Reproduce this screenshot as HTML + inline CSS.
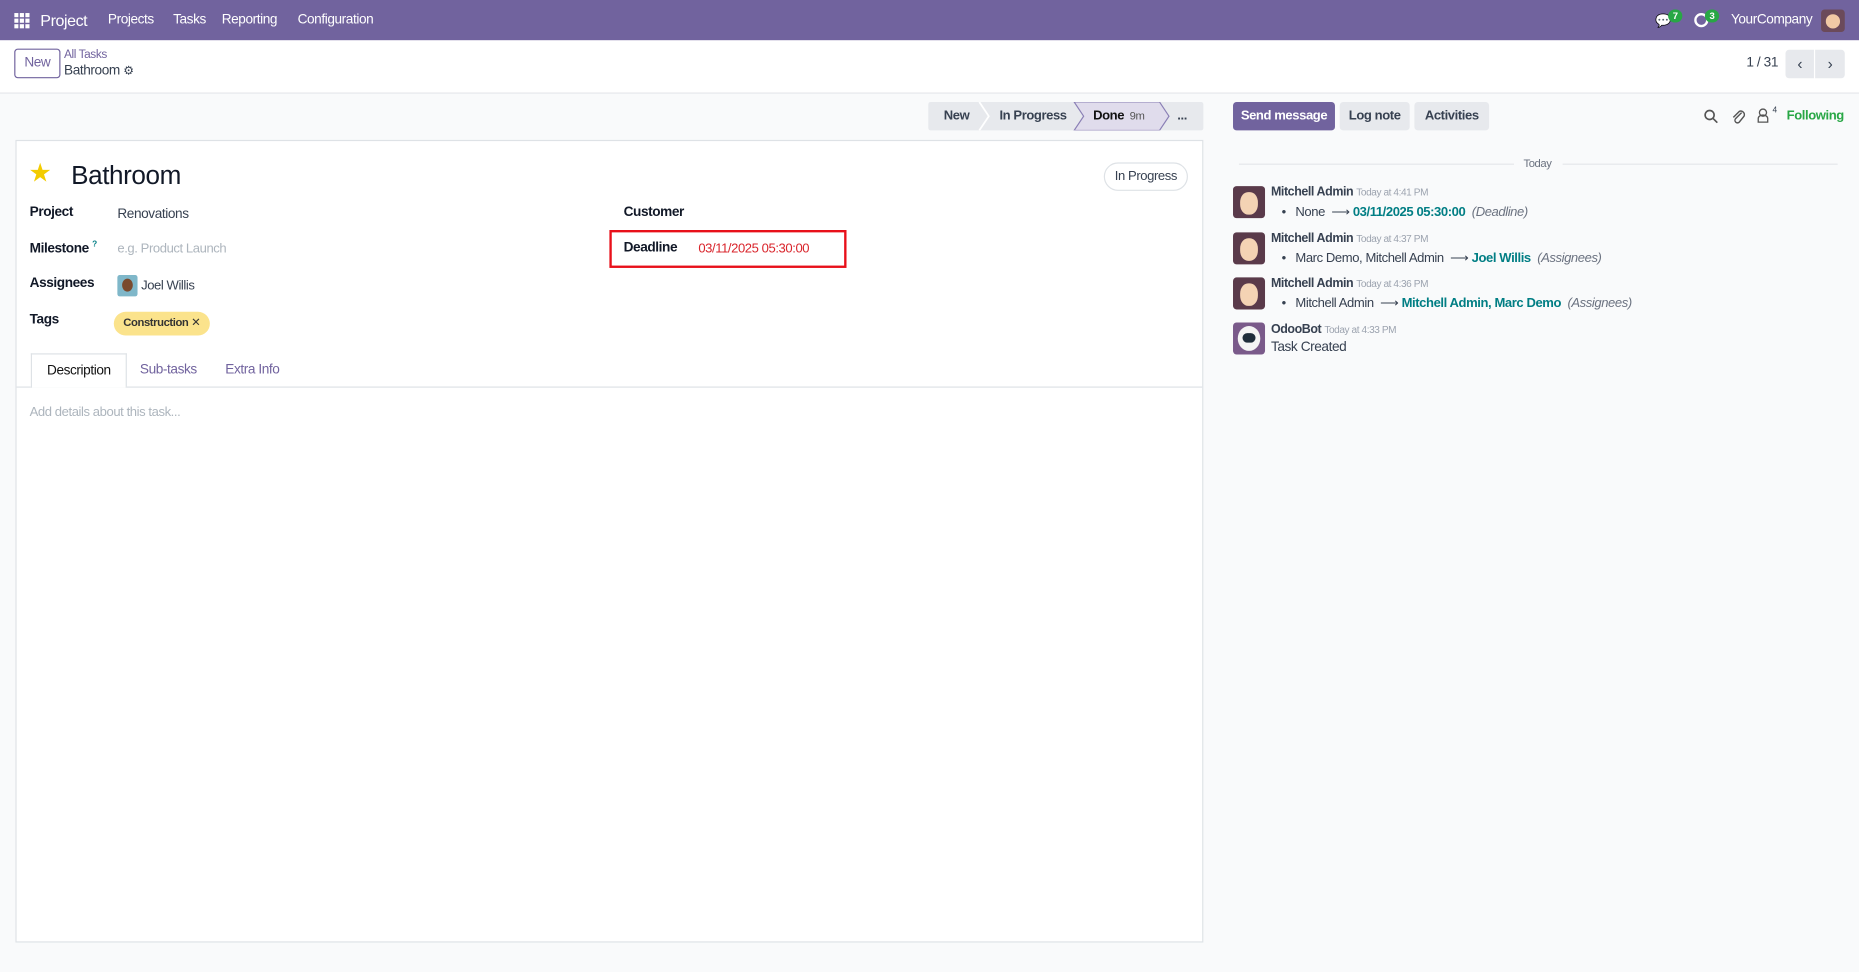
<!DOCTYPE html>
<html><head><meta charset="utf-8"><style>
*{box-sizing:border-box;margin:0;padding:0}
html,body{width:1859px;height:972px;overflow:hidden;background:#f9fafb}
#w{width:1568px;height:820px;transform:scale(1.18559);transform-origin:0 0;position:relative;font-family:"Liberation Sans",sans-serif;color:#374151;font-size:12px;letter-spacing:-0.35px}
.a{position:absolute;white-space:nowrap}
.nav{left:0;top:0;width:1568px;height:34px;background:#71639e;color:#fff}
.cp{left:0;top:34px;width:1568px;height:45px;background:#fff;border-bottom:1px solid #e5e7eb}
.btn{position:absolute;background:#e7e9ed;border-radius:3px;text-align:center;line-height:24px;font-weight:bold;color:#374151;font-size:11px}
.lbl{font-weight:bold;color:#111827;font-size:11.5px}
.av{position:absolute;width:27px;height:27px;border-radius:3px;background:#5a3a4a;overflow:hidden}
.nm{font-weight:bold;font-size:10.5px;color:#374151}
.tm{font-size:8.5px;color:#9ca3af;font-weight:normal}
.ln{color:#017e84;font-weight:bold}
.it{font-style:italic;color:#6b7280}
</style></head><body><div id="w">
<div class="a nav">
 <svg class="a" style="left:12px;top:11px" width="13" height="13" viewBox="0 0 13 13" fill="#fff"><rect x="0" y="0" width="3.5" height="3.5"/><rect x="4.7" y="0" width="3.5" height="3.5"/><rect x="9.4" y="0" width="3.5" height="3.5"/><rect x="0" y="4.7" width="3.5" height="3.5"/><rect x="4.7" y="4.7" width="3.5" height="3.5"/><rect x="9.4" y="4.7" width="3.5" height="3.5"/><rect x="0" y="9.4" width="3.5" height="3.5"/><rect x="4.7" y="9.4" width="3.5" height="3.5"/><rect x="9.4" y="9.4" width="3.5" height="3.5"/></svg>
 <div class="a" style="left:34px;top:10px;font-size:13.5px">Project</div>
 <div class="a" style="left:91px;top:11px;font-size:11.5px">Projects</div>
 <div class="a" style="left:146px;top:11px;font-size:11.5px">Tasks</div>
 <div class="a" style="left:187px;top:11px;font-size:11.5px">Reporting</div>
 <div class="a" style="left:251px;top:11px;font-size:11.5px">Configuration</div>
 <div class="a" style="left:1396px;top:11px;font-size:11px">💬</div>
 <div class="a" style="left:1407px;top:8px;width:12px;height:11px;border-radius:6px;background:#28a745;font-size:8px;text-align:center;line-height:11px;font-weight:bold">7</div>
 <div class="a" style="left:1429px;top:11px;width:12px;height:12px;border:2px solid #fff;border-radius:50%"></div>
 <div class="a" style="left:1438px;top:8px;width:12px;height:11px;border-radius:6px;background:#28a745;font-size:8px;text-align:center;line-height:11px;font-weight:bold">3</div>
 <div class="a" style="left:1460px;top:11px;font-size:11.5px">YourCompany</div>
 <div class="a" style="left:1536px;top:8px;width:20px;height:19px;border-radius:3px;background:#6b4a5a"><div style="margin:4px 4px;width:12px;height:12px;border-radius:50%;background:#f1c9a5"></div></div>
</div>
<div class="a cp">
 <div class="a" style="left:12px;top:7px;width:39px;height:25px;border:1px solid #71639e;border-radius:3px;color:#71639e;text-align:center;line-height:23px;font-size:11.5px">New</div>
 <div class="a" style="left:54px;top:7px;font-size:10px;color:#71639e">All Tasks</div>
 <div class="a" style="left:54px;top:20px;font-size:11.5px;color:#374151">Bathroom <span style="font-size:10px">⚙</span></div>
 <div class="a" style="left:1473px;top:13px;font-size:11.5px">1 / 31</div>
 <div class="btn" style="left:1506px;top:8px;width:24px;font-weight:normal;border-radius:3px 0 0 3px;font-size:13px">‹</div>
 <div class="btn" style="left:1531px;top:8px;width:25px;font-weight:normal;border-radius:0 3px 3px 0;font-size:13px">›</div>
</div>
<div class="a" style="left:783px;top:86px;width:232px;height:24px;background:#e7e9ed;border-radius:2px"></div>
<svg class="a" style="left:783px;top:86px" width="232" height="24"><polygon points="123,0 195,0 203,12 195,24 123,24 131,12" fill="#e0dcec" stroke="#8a7fb5"/><polyline points="43,0 51,12 43,24" fill="none" stroke="#fff" stroke-width="1.5"/></svg>
<div class="a" style="left:796px;top:92px;font-weight:bold;font-size:11px">New</div>
<div class="a" style="left:843px;top:92px;font-weight:bold;font-size:11px">In Progress</div>
<div class="a" style="left:922px;top:92px;font-weight:bold;font-size:11px;color:#111">Done <span style="font-weight:normal;font-size:9.5px;color:#555;margin-left:2px">9m</span></div>
<div class="a" style="left:993px;top:92px;font-weight:bold;font-size:11px">...</div>
<div class="a" style="left:13px;top:118px;width:1002px;height:677px;background:#fff;border:1px solid #dee2e6"></div>
<div class="a" style="left:24px;top:133px;font-size:22px;color:#f3cc00">★</div>
<div class="a" style="left:60px;top:135px;font-size:22px;color:#111827">Bathroom</div>
<div class="a" style="left:931px;top:137px;width:71px;height:24px;border:1px solid #dee2e6;border-radius:12px;text-align:center;line-height:22px;font-size:11px">In Progress</div>
<div class="a lbl" style="left:25px;top:173px">Project</div><div class="a" style="left:99px;top:175px;font-size:11.5px">Renovations</div>
<div class="a lbl" style="left:25px;top:203px">Milestone <sup style="color:#017e84;font-size:7px">?</sup></div><div class="a" style="left:99px;top:204px;color:#adb5bd;font-size:11px">e.g. Product Launch</div>
<div class="a lbl" style="left:25px;top:233px">Assignees</div>
<div class="a" style="left:99px;top:232px;width:17px;height:18px;border-radius:2px;background:#7fb7c9"><div style="margin:3px 4px;width:9px;height:11px;border-radius:50%;background:#7a4a2e"></div></div>
<div class="a" style="left:119px;top:235px;font-size:11px">Joel Willis</div>
<div class="a lbl" style="left:25px;top:264px">Tags</div>
<div class="a" style="left:96px;top:263px;width:81px;height:20px;border-radius:10px;background:#fbe38c;font-size:9.5px;font-weight:bold;line-height:20px;padding-left:8px;color:#333">Construction <span style="font-weight:normal">✕</span></div>
<div class="a lbl" style="left:526px;top:173px">Customer</div>
<div class="a" style="left:514px;top:194px;width:200px;height:32px;border:2px solid #e8101a"></div>
<div class="a lbl" style="left:526px;top:203px">Deadline</div>
<div class="a" style="left:589px;top:204px;color:#d9242b;font-size:11px">03/11/2025 05:30:00</div>
<div class="a" style="left:14px;top:326px;width:1000px;border-top:1px solid #dee2e6"></div>
<div class="a" style="left:26px;top:298px;width:81px;height:29px;background:#fff;border:1px solid #dee2e6;border-bottom:none;text-align:center;line-height:28px;color:#111;font-size:11.5px">Description</div>
<div class="a" style="left:118px;top:306px;color:#71639e;font-size:11.5px">Sub-tasks</div>
<div class="a" style="left:190px;top:306px;color:#71639e;font-size:11.5px">Extra Info</div>
<div class="a" style="left:25px;top:342px;color:#adb5bd;font-size:11px">Add details about this task...</div>
<div class="btn" style="left:1040px;top:86px;width:86px;background:#71639e;color:#fff">Send message</div>
<div class="btn" style="left:1130px;top:86px;width:59px">Log note</div>
<div class="btn" style="left:1193px;top:86px;width:63px">Activities</div>
<svg class="a" style="left:1437px;top:92px" width="12" height="12" fill="none" stroke="#555" stroke-width="1.4"><circle cx="5" cy="5" r="3.8"/><line x1="8" y1="8" x2="11.5" y2="11.5"/></svg>
<svg class="a" style="left:1460px;top:91px" width="12" height="14" fill="none" stroke="#555" stroke-width="1.2"><path d="M9 4 L4 9 a2 2 0 0 0 3 3 L11 7 a3 3 0 0 0 -4 -4 L2 8"/></svg>
<svg class="a" style="left:1482px;top:91px" width="10" height="13" fill="none" stroke="#555" stroke-width="1.1"><circle cx="5" cy="4" r="3"/><path d="M1 12 v-3 a4 3 0 0 1 8 0 v3z"/></svg>
<div class="a" style="left:1495px;top:90px;font-size:7px">4</div>
<div class="a" style="left:1507px;top:92px;color:#28a745;font-weight:bold;font-size:11px">Following</div>
<div class="a" style="left:1045px;top:138px;width:232px;border-top:1px solid #e5e7eb"></div>
<div class="a" style="left:1285px;top:133px;font-size:9.5px;color:#6b7280">Today</div>
<div class="a" style="left:1318px;top:138px;width:232px;border-top:1px solid #e5e7eb"></div>
<div class="av" style="left:1040px;top:157px"><div style="margin:5px 6px;width:15px;height:19px;border-radius:45%;background:#f4d3b4"></div></div>
<div class="a nm" style="left:1072px;top:156px">Mitchell Admin <span class="tm">Today at 4:41 PM</span></div>
<div class="a" style="left:1081px;top:172px;font-size:11px">•&nbsp;&nbsp; None &nbsp;⟶ <span class="ln">03/11/2025 05:30:00</span> &nbsp;<span class="it">(Deadline)</span></div>
<div class="av" style="left:1040px;top:196px"><div style="margin:5px 6px;width:15px;height:19px;border-radius:45%;background:#f4d3b4"></div></div>
<div class="a nm" style="left:1072px;top:195px">Mitchell Admin <span class="tm">Today at 4:37 PM</span></div>
<div class="a" style="left:1081px;top:211px;font-size:11px">•&nbsp;&nbsp; Marc Demo, Mitchell Admin &nbsp;⟶ <span class="ln">Joel Willis</span> &nbsp;<span class="it">(Assignees)</span></div>
<div class="av" style="left:1040px;top:234px"><div style="margin:5px 6px;width:15px;height:19px;border-radius:45%;background:#f4d3b4"></div></div>
<div class="a nm" style="left:1072px;top:233px">Mitchell Admin <span class="tm">Today at 4:36 PM</span></div>
<div class="a" style="left:1081px;top:249px;font-size:11px">•&nbsp;&nbsp; Mitchell Admin &nbsp;⟶ <span class="ln">Mitchell Admin, Marc Demo</span> &nbsp;<span class="it">(Assignees)</span></div>
<div class="av" style="left:1040px;top:272px;background:#7a5a8a"><div style="margin:3px 4px;width:19px;height:21px;border-radius:50%;background:#f4f4f4;padding:6px 4px"><div style="width:11px;height:8px;border-radius:4px;background:#1f2d3a"></div></div></div>
<div class="a nm" style="left:1072px;top:272px">OdooBot <span class="tm">Today at 4:33 PM</span></div>
<div class="a" style="left:1072px;top:287px;font-size:11.5px">Task Created</div>
</div></body></html>
